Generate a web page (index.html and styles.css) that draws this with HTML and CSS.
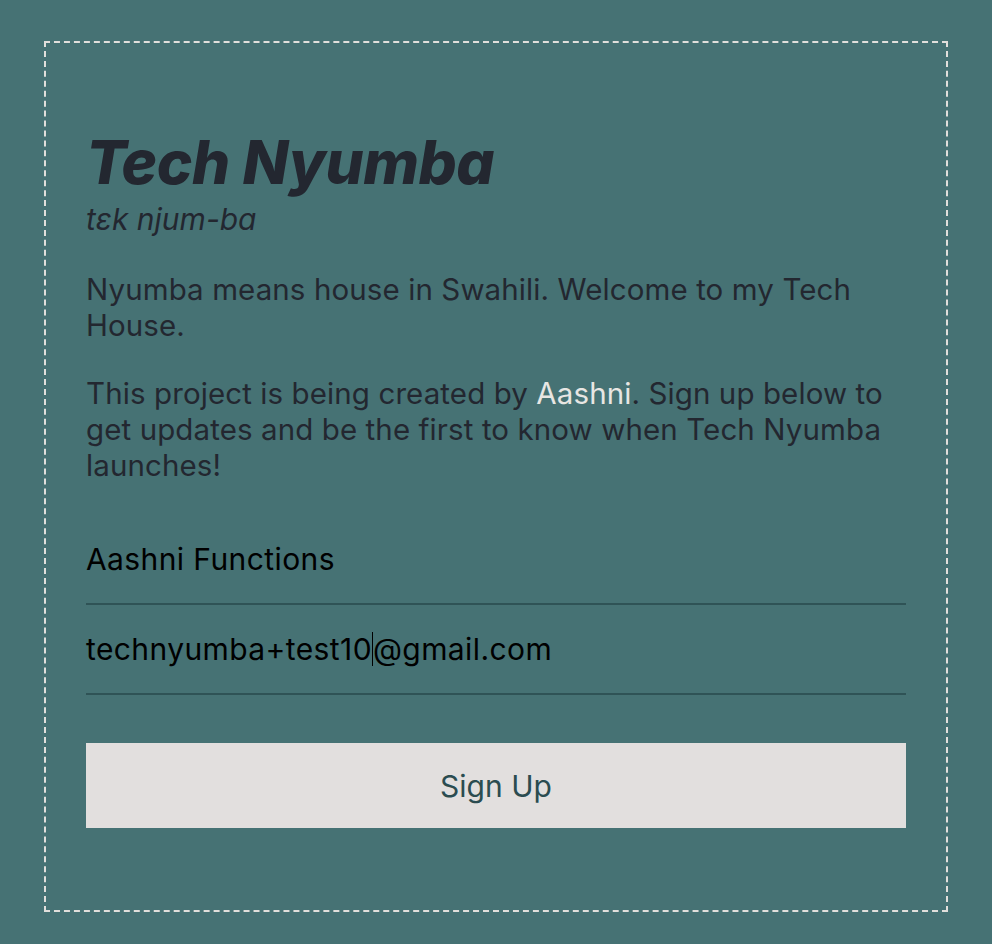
FILE: index.html
```html
<!DOCTYPE html>
<html lang="en">
<head>
<meta charset="utf-8">
<title>Tech Nyumba</title>
<link rel="stylesheet" href="styles.css">
</head>
<body>
<main class="page">
  <section class="card">
    <header class="intro">
      <h1 class="title">Tech Nyumba</h1>
      <div class="phonetic">tɛk njum-ba</div>
    </header>
    <p class="text">Nyumba means house in Swahili. Welcome to my Tech House.</p>
    <p class="text">This project is being created by <a class="link" href="#">Aashni</a>. Sign up below to get updates and be the first to know when Tech Nyumba launches!</p>
    <form class="form">
      <div class="field"><span class="value">Aashni Functions</span></div>
      <div class="field"><span class="value">technyumba+test10</span><span class="caret"></span><span class="value">@gmail.com</span></div>
      <button class="button" type="button">Sign Up</button>
    </form>
  </section>
</main>
</body>
</html>
```

FILE: styles.css
```css
html, body {
  margin: 0;
  background: #467274;
}
body {
  font-family: Inter, "Noto Sans", sans-serif;
  color: #232730;
}
.page {
  padding: 41px 44px 33px 44px;
}
.card {
  width: 820px;
  border: 2px dashed #e2dfdc;
  padding: 84px 40px 82px 40px;
}
.intro {
  margin-bottom: 30px;
}
.title {
  margin: 0;
  font-size: 60px;
  font-weight: 800;
  font-style: italic;
  line-height: 70px;
  letter-spacing: -0.4px;
}
.phonetic {
  font-size: 30px;
  font-style: italic;
  line-height: 44px;
}
.text {
  font-size: 29.5px;
  letter-spacing: 0.1px;
  line-height: 36px;
  margin: 0 0 32px 0;
}
.link {
  color: #e8e6e3;
  text-decoration: none;
}
.form {
  display: flex;
  flex-direction: column;
  margin-top: 32px;
}
.field {
  display: flex;
  align-items: center;
  height: 88px;
  border-bottom: 2px solid #2f5356;
  font-size: 30px;
  letter-spacing: 0.4px;
  color: #000;
}
.caret {
  width: 1px;
  height: 34px;
  background: #000;
}
.button {
  margin-top: 48px;
  height: 85px;
  border: 0;
  background: #e2dfde;
  color: #2b4c50;
  font-family: Inter, "Noto Sans", sans-serif;
  font-size: 30px;
}
```
